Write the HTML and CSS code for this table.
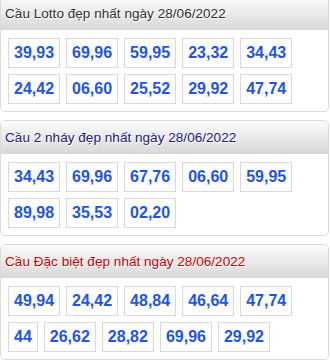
FILE: index.html
```html
<!DOCTYPE html>
<html lang="vi">
<head>
<meta charset="utf-8">
<link rel="stylesheet" href="styles.css">
</head>
<body>
<div class="list">
  <section class="card">
    <h2 class="card-head head-lotto">Cầu Lotto đẹp nhất ngày 28/06/2022</h2>
    <div class="card-body">
      <span class="num">39,93</span><span class="num">69,96</span><span class="num">59,95</span><span class="num">23,32</span><span class="num">34,43</span>
      <span class="num">24,42</span><span class="num">06,60</span><span class="num">25,52</span><span class="num">29,92</span><span class="num">47,74</span>
    </div>
  </section>
  <section class="card">
    <h2 class="card-head head-2nhay">Cầu 2 nháy đẹp nhất ngày 28/06/2022</h2>
    <div class="card-body">
      <span class="num">34,43</span><span class="num">69,96</span><span class="num">67,76</span><span class="num">06,60</span><span class="num">59,95</span>
      <span class="num">89,98</span><span class="num">35,53</span><span class="num">02,20</span>
    </div>
  </section>
  <section class="card">
    <h2 class="card-head head-db">Cầu Đặc biệt đẹp nhất ngày 28/06/2022</h2>
    <div class="card-body">
      <span class="num">49,94</span><span class="num">24,42</span><span class="num">48,84</span><span class="num">46,64</span><span class="num">47,74</span>
      <span class="num">44</span><span class="num">26,62</span><span class="num">28,82</span><span class="num">69,96</span><span class="num">29,92</span>
    </div>
  </section>
</div>
</body>
</html>
```

FILE: styles.css
```css
html, body {
  margin: 0;
  padding: 0;
  background: #fff;
}
body {
  font-family: "Liberation Sans", Arial, sans-serif;
  width: 330px;
  overflow: hidden;
}
.list {
  display: flex;
  flex-direction: column;
  gap: 8px;
  margin-top: -4px;
  width: 329px;
}
.card {
  border: 1px solid #dcdcdc;
  border-radius: 5px;
  background: #fff;
  overflow: hidden;
}
.card-head {
  margin: 0;
  height: 33px;
  line-height: 33px;
  padding: 0 0 0 4px;
  font-size: 13.6px;
  font-weight: normal;
  background: linear-gradient(#fbfbfb, #d8d8d8);
  text-shadow: 1px 1px 0 #fff;
  white-space: nowrap;
}
.head-lotto { color: #333; }
.head-2nhay { color: #22227e; }
.head-db { color: #cc0000; }
.card-body {
  display: flex;
  flex-wrap: wrap;
  gap: 6px;
  padding: 8px 7px 7px 7px;
}
.num {
  display: block;
  box-sizing: border-box;
  height: 30px;
  line-height: 28px;
  padding: 0 5px;
  border: 1px solid #d9d9d9;
  background: #fdfdff;
  color: #1f55e6;
  font-size: 16px;
  font-weight: bold;
}
```
